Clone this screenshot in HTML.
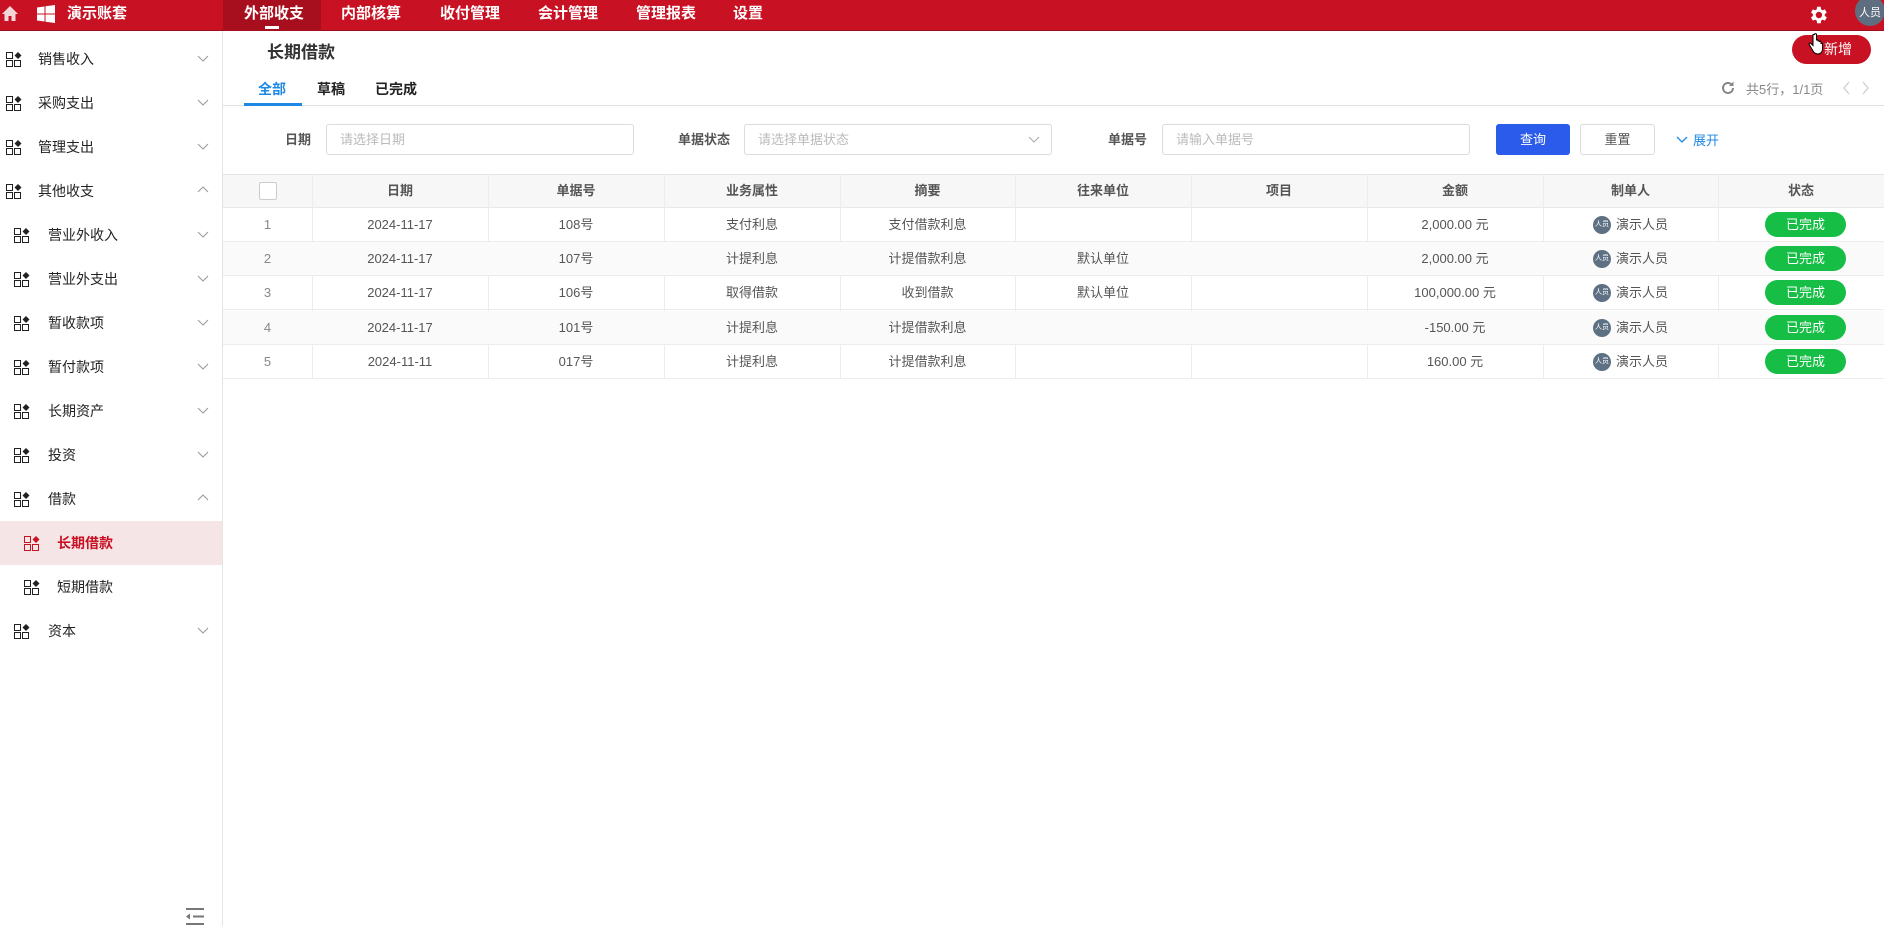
<!DOCTYPE html>
<html><head><meta charset="utf-8">
<style>
*{box-sizing:border-box;margin:0;padding:0}
body{width:1884px;height:926px;position:relative;overflow:hidden;background:#fff;font-family:"Liberation Sans","Noto Sans CJK SC",sans-serif;color:#333}
.a{position:absolute}
.top{left:0;top:0;width:1884px;height:31px;background:#c81123;border-bottom:1px solid #9d0d1a}
.nav{top:0;height:31px;line-height:28px;color:#fff;font-size:15px;font-weight:bold}
.sb{left:0;top:31px;width:223px;height:895px;border-right:1px solid #e4e4e4}
.mi{left:0;width:222px;height:44px;font-size:14px;color:#222}
.mi .ic{position:absolute;top:15px}
.mi .t{position:absolute;top:0;line-height:44px}
.mi .ch{position:absolute;left:196px;top:14px}
.hd{font-size:13px;color:#555;font-weight:bold;text-align:center}
.cell{position:absolute;text-align:center;font-size:13px;color:#555;line-height:34px}
.inp{height:31px;border:1px solid #dcdcdc;border-radius:3px;font-size:13px;color:#bbb;line-height:29px;padding-left:13px}
.lab{font-size:13px;color:#555;font-weight:bold;line-height:31px;top:124px}
.pill{position:absolute;width:81px;height:25px;border-radius:13px;background:#16be45;color:#fff;font-size:13px;text-align:center;line-height:25px}
.av{position:absolute;width:18px;height:18px;border-radius:50%;background:#5e7083;color:#fff;font-size:7px;text-align:center;line-height:18px}
</style></head><body>
<div class="a top"></div>
<svg class="a" style="left:1px;top:5px" width="18" height="17" viewBox="0 0 18 17"><path d="M9 1L1 9h2.5v7h4v-5h3v5h4V9H17z" fill="#f4d6d9"/></svg>
<svg class="a" style="left:37px;top:5px" width="18" height="18" viewBox="0 0 18 18"><path d="M0 2.5l7.5-1v7H0zM8.5 1.3L18 0v8.5H8.5zM0 9.5h7.5v7L0 15.5zM8.5 9.5H18V18l-9.5-1.3z" fill="#fff"/></svg>
<div class="a nav" style="left:67px">演示账套</div>
<div class="a" style="left:223px;top:0;width:98px;height:31px;background:#a80f1e"></div>
<div class="a" style="left:265px;top:26px;width:14px;height:3px;background:#fff"></div>
<div class="a nav" style="left:244px">外部收支</div>
<div class="a nav" style="left:341px">内部核算</div>
<div class="a nav" style="left:440px">收付管理</div>
<div class="a nav" style="left:538px">会计管理</div>
<div class="a nav" style="left:636px">管理报表</div>
<div class="a nav" style="left:733px">设置</div>
<svg class="a" style="left:1807px;top:4px" width="22" height="22" viewBox="0 0 24 24"><path fill="#fff" d="M19.4 13a7.5 7.5 0 000-2l2.1-1.6-2-3.5-2.5 1a7 7 0 00-1.7-1L15 3h-4l-.4 2.9a7 7 0 00-1.7 1l-2.5-1-2 3.5L6.5 11a7.5 7.5 0 000 2l-2.1 1.6 2 3.5 2.5-1a7 7 0 001.7 1L11 21h4l.4-2.9a7 7 0 001.7-1l2.5 1 2-3.5zM13 15.5a3.5 3.5 0 110-7 3.5 3.5 0 010 7z"/></svg>
<div class="a" style="left:1855px;top:-4px;width:30px;height:30px;border-radius:50%;background:#5e6e80;color:#fff;font-size:11px;line-height:34px;text-align:center">人员</div>

<div class="a sb"></div>
<div id="menu"></div>
<svg class="a" style="left:185px;top:908px" width="20" height="18" viewBox="0 0 20 18"><path d="M1 1h18M8 8.5h11M1 16h18" stroke="#777" stroke-width="2"/><path d="M1 8.5l4-3v6z" fill="#777"/></svg>

<div class="a" style="left:267px;top:38px;font-size:17px;font-weight:bold;color:#333">长期借款</div>
<div class="a" style="left:1792px;top:35px;width:79px;height:29px;border-radius:15px;background:#c81123;color:#fff;font-size:14px;line-height:29px;padding-left:32px">新增</div>
<svg class="a" style="left:1808px;top:33px" width="16" height="22" viewBox="0 0 16 22"><path d="M5 1.5v11l-2-2c-1-1-2.5 0-1.7 1.2L5 18c1 2 2.5 3 5 3s4.5-2 4.5-5v-5c0-1-1.5-1-1.5 0V9c0-1-1.5-1-1.5 0v-.5c0-1-1.5-1-1.5 0V7.5c0-1-1.5-1-1.5 0V1.5c0-1.2-2-1.2-2 0z" fill="#fff" stroke="#000" stroke-width="1"/></svg>
<div class="a" style="left:258px;top:79px;font-size:14px;color:#1e88e5;font-weight:bold">全部</div>
<div class="a" style="left:317px;top:79px;font-size:14px;color:#222;font-weight:bold">草稿</div>
<div class="a" style="left:375px;top:79px;font-size:14px;color:#222;font-weight:bold">已完成</div>
<div class="a" style="left:223px;top:105px;width:1661px;height:1px;background:#e2e2e2"></div>
<div class="a" style="left:244px;top:103px;width:58px;height:3px;background:#1e88e5"></div>
<svg class="a" style="left:1720px;top:80px" width="16" height="16" viewBox="0 0 16 16"><path d="M13 8a5 5 0 11-1.5-3.6" fill="none" stroke="#888" stroke-width="2"/><path d="M13.5 1.5v4.5H9z" fill="#888"/></svg>
<div class="a" style="left:1746px;top:79px;font-size:13px;color:#888">共5行，1/1页</div>
<svg class="a" style="left:1842px;top:81px" width="30" height="14" viewBox="0 0 30 14"><path d="M7 1L2 7l5 6M21 1l5 6-5 6" fill="none" stroke="#ccc" stroke-width="1.2"/></svg>

<div class="a lab" style="left:285px">日期</div>
<div class="a inp" style="left:326px;top:124px;width:308px">请选择日期</div>
<div class="a lab" style="left:678px">单据状态</div>
<div class="a inp" style="left:744px;top:124px;width:308px">请选择单据状态</div>
<svg class="a" style="left:1028px;top:136px" width="12" height="8" viewBox="0 0 12 8"><path d="M1 1l5 5 5-5" fill="none" stroke="#aaa"/></svg>
<div class="a lab" style="left:1108px">单据号</div>
<div class="a inp" style="left:1162px;top:124px;width:308px">请输入单据号</div>
<div class="a" style="left:1496px;top:124px;width:74px;height:31px;background:#2a5bea;border-radius:3px;color:#fff;font-size:13px;text-align:center;line-height:31px">查询</div>
<div class="a" style="left:1580px;top:124px;width:75px;height:31px;border:1px solid #dcdcdc;border-radius:3px;color:#555;font-size:13px;text-align:center;line-height:29px">重置</div>
<svg class="a" style="left:1676px;top:136px" width="12" height="8" viewBox="0 0 12 8"><path d="M1 1l5 5 5-5" fill="none" stroke="#1e88e5" stroke-width="1.3"/></svg>
<div class="a" style="left:1693px;top:130px;font-size:13px;color:#1e88e5">展开</div>

<div class="a" style="left:223px;top:174px;width:1661px;height:34px;background:#f7f7f7;border-top:1px solid #e4e4e4;border-bottom:1px solid #e8e8e8"></div>
<div id="tbl"></div>
<script>
var m=[["销售收入",0,"v"],["采购支出",0,"v"],["管理支出",0,"v"],["其他收支",0,"^"],["营业外收入",1,"v"],["营业外支出",1,"v"],["暂收款项",1,"v"],["暂付款项",1,"v"],["长期资产",1,"v"],["投资",1,"v"],["借款",1,"^"],["长期借款",2,"",1],["短期借款",2,""],["资本",1,"v"]];
var h="";
m.forEach(function(r,i){var y=37+i*44;var ix=r[1]==0?6:(r[1]==1?14:24);var tx=r[1]==0?38:(r[1]==1?48:57);var act=r[3];var c=act?"#c81123":"#222";
h+='<div class="a mi" style="top:'+y+'px;'+(act?'background:#f6e5e7;':'')+'"><svg class="ic" style="left:'+ix+'px" width="17" height="15" viewBox="0 0 17 15"><rect x="0.5" y="0.5" width="6" height="6" fill="none" stroke="'+c+'"/><rect x="0.5" y="8.5" width="6" height="6" fill="none" stroke="'+c+'"/><rect x="8.5" y="8.5" width="6" height="6" fill="none" stroke="'+c+'"/><path d="M12 0l3.5 3.5L12 7 8.5 3.5z" fill="'+c+'"/></svg><span class="t" style="left:'+tx+'px;color:'+c+';'+(act?'font-weight:bold':'')+'">'+r[0]+'</span>'+(r[2]?'<svg class="ch" width="14" height="14" viewBox="0 0 14 14"><path d="'+(r[2]=="v"?'M2 5l5 5 5-5':'M2 9l5-5 5 5')+'" fill="none" stroke="#999"/></svg>':'')+'</div>';});
document.getElementById("menu").innerHTML=h;
var cb=[223,312,488,664,840,1015,1191,1367,1543,1718,1884];
var hd=["","日期","单据号","业务属性","摘要","往来单位","项目","金额","制单人","状态"];
var rows=[["1","2024-11-17","108号","支付利息","支付借款利息","","","2,000.00 元"],["2","2024-11-17","107号","计提利息","计提借款利息","默认单位","","2,000.00 元"],["3","2024-11-17","106号","取得借款","收到借款","默认单位","","100,000.00 元"],["4","2024-11-17","101号","计提利息","计提借款利息","","","-150.00 元"],["5","2024-11-11","017号","计提利息","计提借款利息","","","160.00 元"]];
var t="";
for(var j=1;j<10;j++){t+='<div class="a" style="left:'+cb[j]+'px;top:174px;width:1px;height:205px;background:#ececec"></div>';}
t+='<div class="a" style="left:259px;top:182px;width:18px;height:18px;border:1px solid #ccc;border-radius:2px;background:#fff"></div>';
for(var j=1;j<10;j++)t+='<div class="cell hd" style="left:'+cb[j]+'px;width:'+(cb[j+1]-cb[j])+'px;top:174px">'+hd[j]+'</div>';
rows.forEach(function(r,i){var y=208+i*34.2;
t+='<div class="a" style="left:223px;top:'+y+'px;width:1661px;height:34px;'+(i%2?'background:#fafafa;':'')+'border-bottom:1px solid #ececec"></div>';
for(var j=0;j<8;j++)t+='<div class="cell" style="left:'+cb[j]+'px;width:'+(cb[j+1]-cb[j])+'px;top:'+y+'px;'+(j==0?'color:#888':'')+'">'+r[j]+'</div>';
t+='<div class="av" style="left:1593px;top:'+(y+8)+'px">人员</div><div class="cell" style="left:1616px;top:'+y+'px;text-align:left">演示人员</div>';
t+='<div class="pill" style="left:1765px;top:'+(y+4)+'px">已完成</div>';});
document.getElementById("tbl").innerHTML=t;
</script>
</body></html>
